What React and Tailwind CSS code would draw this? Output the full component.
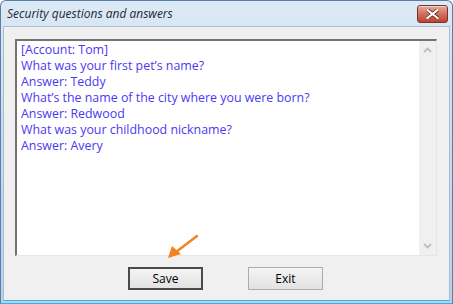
export default function App() {
  const lines = [
    "[Account: Tom]",
    "What was your first pet\u2019s name?",
    "Answer: Teddy",
    "What\u2019s the name of the city where you were born?",
    "Answer: Redwood",
    "What was your childhood nickname?",
    "Answer: Avery",
  ];

  return (
    <div className="relative w-[453px] h-[304px] overflow-hidden">
      <div className="flex flex-col w-full h-full rounded-t-[6px] border border-[#5a7ea6] bg-gradient-to-b from-[#dce9f6] via-[#c6daef] to-[#b9d1ea] border-b-[#2fb5e0]">
        {/* Title bar */}
        <div className="flex items-start justify-between h-[25px] pl-[6px] pr-[4px] shrink-0">
          <span
            className="pt-[5px] text-[12px] leading-[16px] italic text-[#1b2a3a]"
            style={{ fontFamily: '"Open Sans", sans-serif' }}
          >
            Security questions and answers
          </span>
          <CloseButton />
        </div>

        {/* Client area */}
        <div className="flex flex-col flex-1 mx-[2px] mb-[2px] bg-[#f0f0f0] border border-[#a9bdd3] border-b-[#33b8e3]">
          <div className="mt-[12px] ml-[11px] mr-[12px] h-[217px] flex border-t-2 border-l-2 border-t-[#737373] border-l-[#737373] border-r border-b border-r-[#e6e6e6] border-b-[#e6e6e6] bg-white">
            <div
              className="flex-1 pl-[4px] pt-[1px] text-[12.4px] leading-[16px] text-[#4c38f2]"
              style={{ fontFamily: '"Open Sans", sans-serif' }}
            >
              {lines.map((l) => (
                <div key={l}>{l}</div>
              ))}
            </div>
            <div className="w-[17px] bg-[#f0f0f0] flex flex-col justify-between items-center py-[6px]">
              <Chevron up />
              <Chevron />
            </div>
          </div>

          <div className="flex justify-center gap-[45px] mt-[11px] pr-[2px]">
            <button
              className="w-[75px] h-[23px] border-2 border-[#4a4a4a] bg-gradient-to-b from-[#f4f4f4] to-[#e2e2e2] text-[12px] text-black"
              style={{ fontFamily: '"Open Sans", sans-serif' }}
            >
              Save
            </button>
            <button
              className="w-[75px] h-[23px] border border-[#acacac] bg-gradient-to-b from-[#f4f4f4] to-[#e2e2e2] text-[12px] text-black"
              style={{ fontFamily: '"Open Sans", sans-serif' }}
            >
              Exit
            </button>
          </div>
        </div>
      </div>

      {/* Annotation arrow */}
      <svg className="absolute left-0 top-0" width="453" height="304" viewBox="0 0 453 304">
        <line x1="197" y1="236" x2="176" y2="252" stroke="#f5821f" strokeWidth="2.5" strokeLinecap="round" />
        <polygon points="168,258 172,246 181,254" fill="#f5821f" />
      </svg>
    </div>
  );
}

function CloseButton() {
  return (
    <div className="mt-[4px] w-[31px] h-[18px] rounded-[3px] border border-[#7a3325] bg-gradient-to-b from-[#e8a99c] via-[#d0705e] to-[#c0402b] flex items-center justify-center shadow-[inset_0_1px_0_rgba(255,255,255,0.5)]">
      <svg width="13" height="10" viewBox="0 0 13 10">
        <path d="M1.5 1 L11.5 9 M11.5 1 L1.5 9" stroke="#5a1f15" strokeWidth="3.6" strokeLinecap="square" />
        <path d="M1.5 1 L11.5 9 M11.5 1 L1.5 9" stroke="#ffffff" strokeWidth="2.2" strokeLinecap="square" />
      </svg>
    </div>
  );
}

function Chevron({ up }) {
  return (
    <svg width="9" height="6" viewBox="0 0 9 6">
      <path
        d={up ? "M1 5 L4.5 1.5 L8 5" : "M1 1 L4.5 4.5 L8 1"}
        stroke="#bdbdbd"
        strokeWidth="1.8"
        fill="none"
      />
    </svg>
  );
}
